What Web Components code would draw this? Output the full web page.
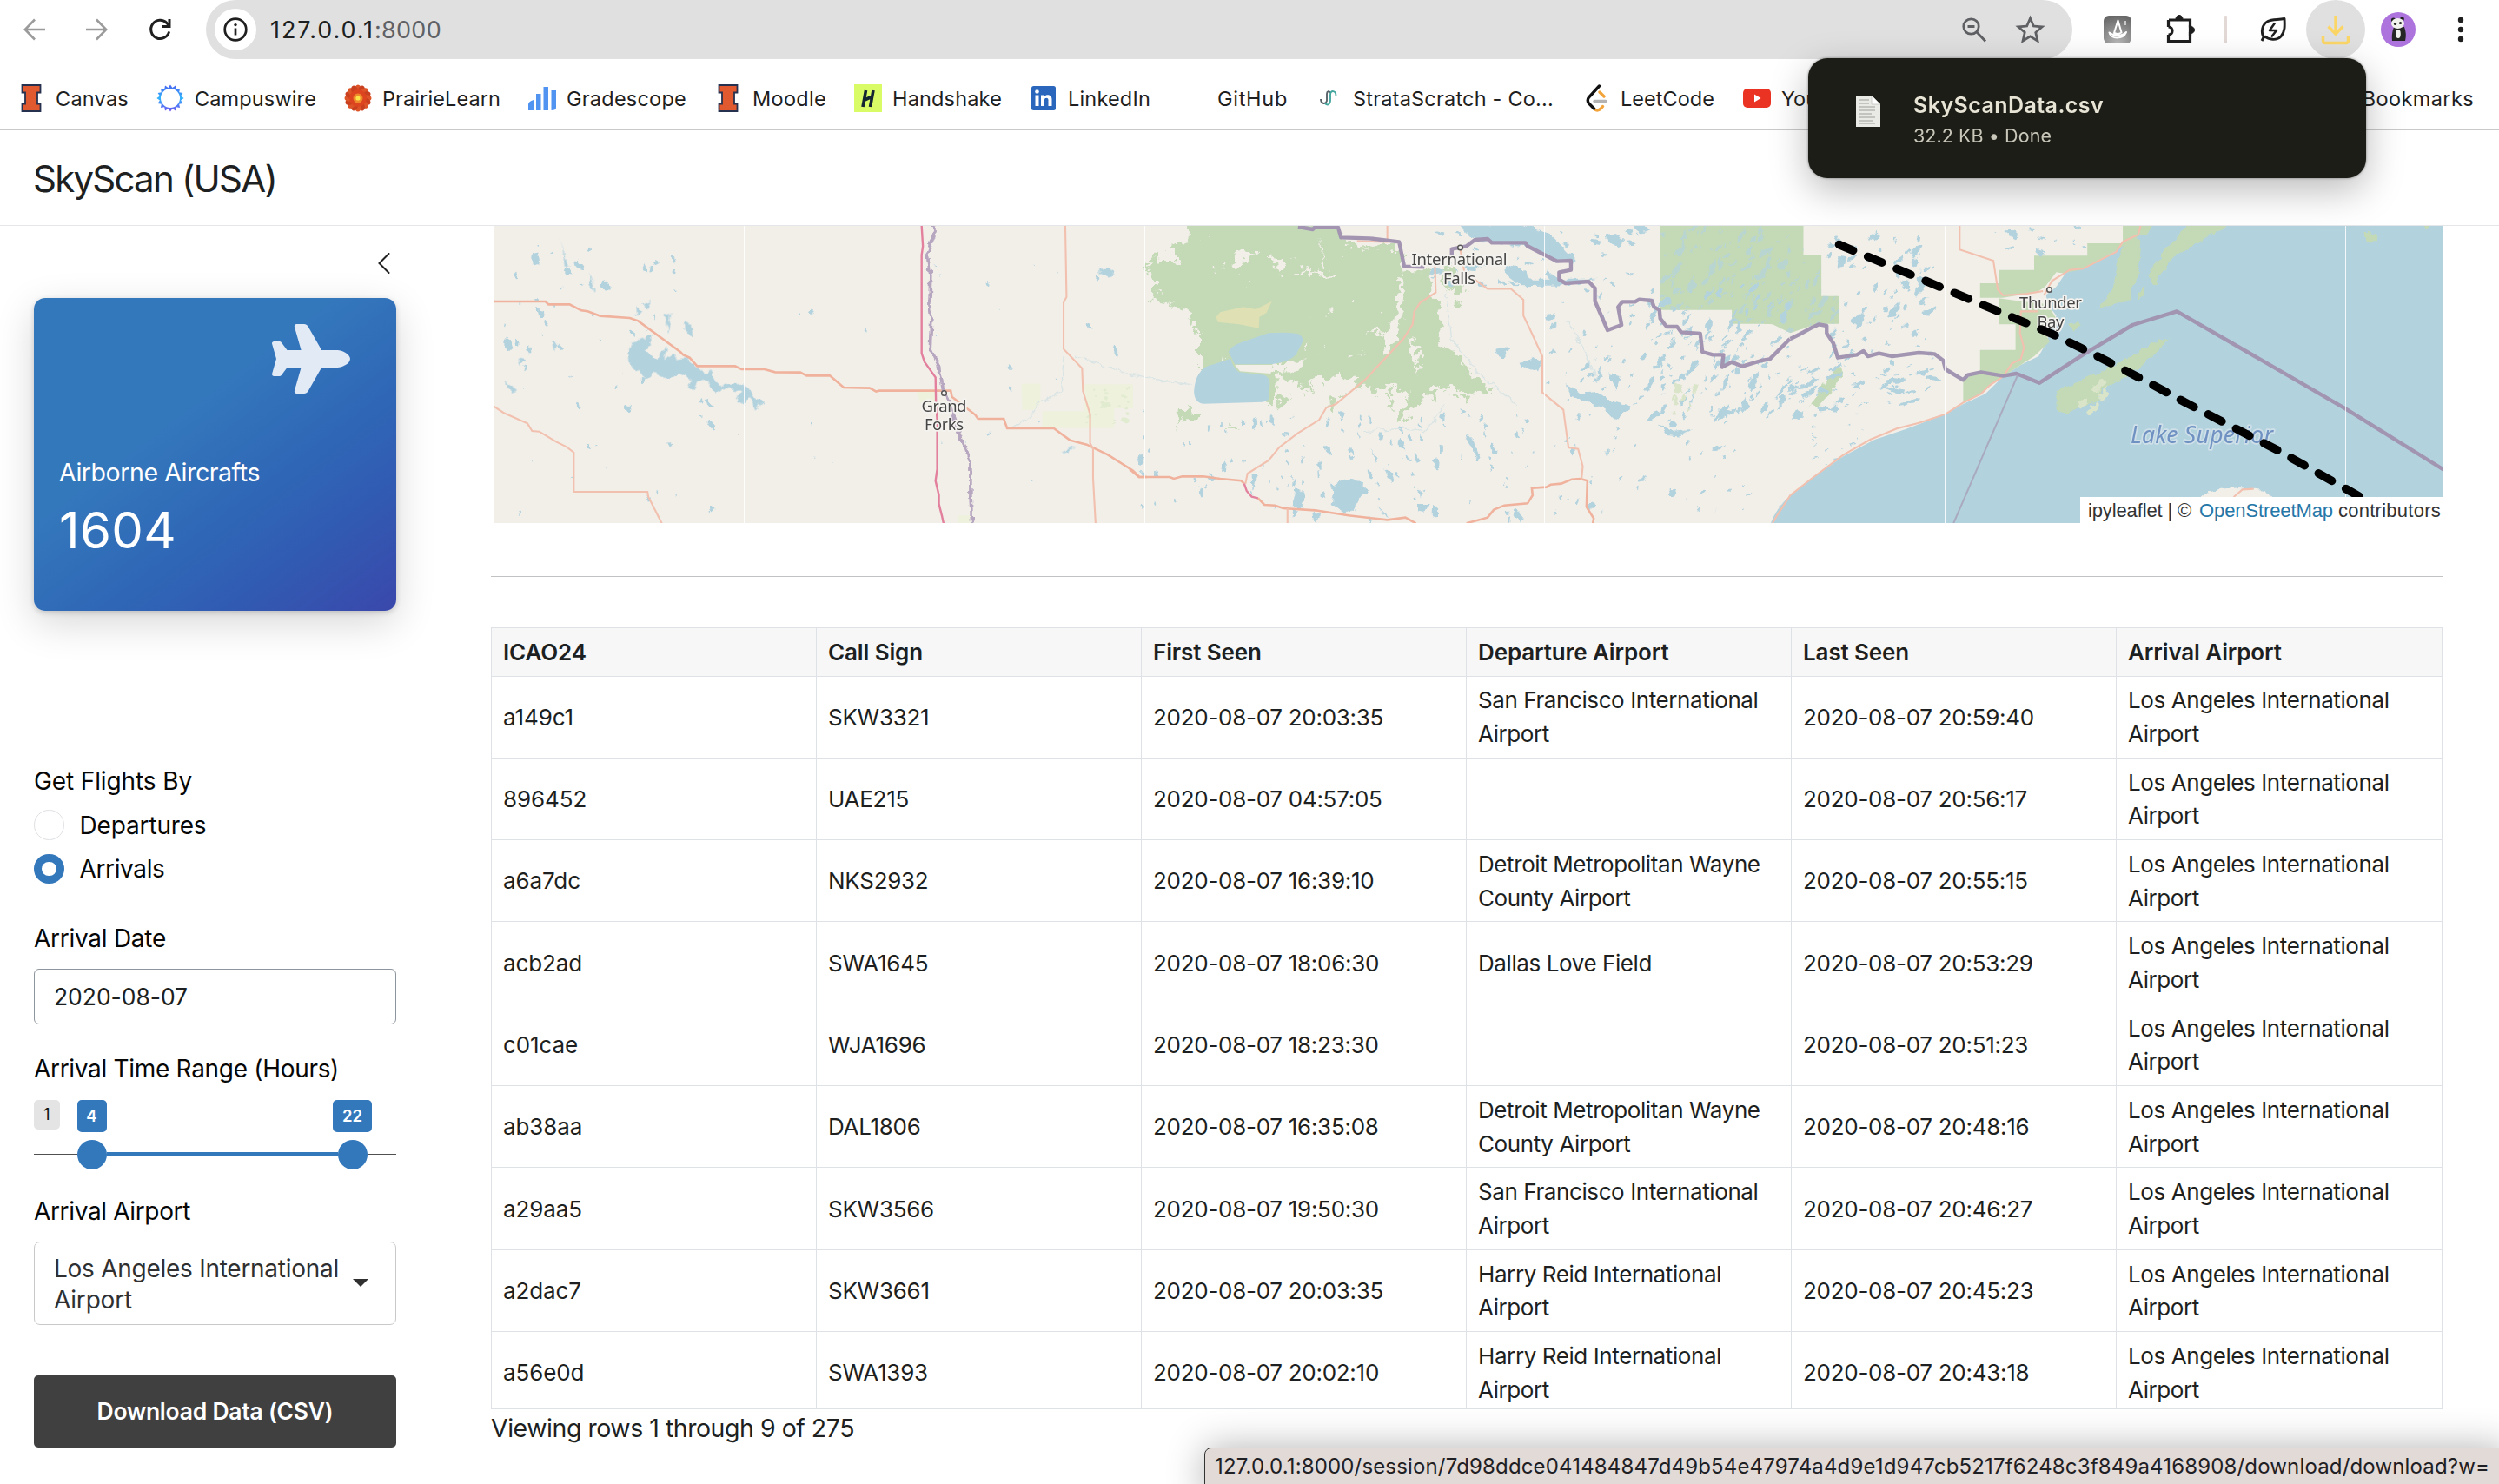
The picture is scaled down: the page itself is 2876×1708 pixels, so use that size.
<!DOCTYPE html>
<html lang="en">
<head>
<meta charset="utf-8">
<title>SkyScan (USA)</title>
<style>
html,body{margin:0;padding:0;background:#fff;overflow:hidden}
body{width:2876px;height:1708px;font-family:Inter,"Noto Sans",sans-serif;color:#1d1f21}
</style>
</head>
<body>
<sky-app></sky-app>
<script>
const define=(name,html,after)=>{
  const t=document.createElement('template');t.innerHTML=html;
  customElements.define(name,class extends HTMLElement{
    connectedCallback(){
      if(this.shadowRoot)return;
      this.attachShadow({mode:'open'}).appendChild(t.content.cloneNode(true));
      if(after)after.call(this,this.shadowRoot);
    }
  });
};

/* Text set to an exact advance width by tracking. */
define('fit-text','<style>:host{display:inline-block;white-space:nowrap}span{display:inline-block}</style><span><slot></slot></span>',function(r){
  const w=+this.getAttribute('w'),s=r.querySelector('span'),n=this.textContent.length;
  const nat=s.getBoundingClientRect().width;
  s.style.letterSpacing=((w-nat)/n).toFixed(3)+'px';
  this.style.width=w+'px';
});

/* ---------- browser chrome ---------- */
define('browser-toolbar',`<style>
:host{display:flex;height:68px;align-items:center;background:#fff;padding-left:24px;box-sizing:border-box}
svg{display:block;flex:none}
.pill{display:flex;align-items:center;box-sizing:border-box;width:2148px;height:68px;border-radius:34px;background:#e0e0e0;padding:0 28px 0 10px;margin-left:37px}
.info{width:48px;height:48px;border-radius:50%;background:#fff;display:flex;align-items:center;justify-content:center;margin-right:16px}
.url{font-size:27px;line-height:34px;flex:1;padding-top:1px}
.port{color:#5f6165}
.dl{width:68px;height:68px;border-radius:50%;background:#e0e0e0;display:flex;align-items:center;justify-content:center}
</style>
<svg width="32" height="32" viewBox="0 0 32 32" fill="none" stroke="#9b9b9b" stroke-width="2.6"><path d="M28 16H5M16 4.5L4.8 16 16 27.5"/></svg>
<svg style="margin-left:39px" width="32" height="32" viewBox="0 0 32 32" fill="none" stroke="#9b9b9b" stroke-width="2.6"><path d="M4 16h23M16 4.500L27.200 16 16 27.500"/></svg>
<svg style="margin-left:41px" width="32" height="32" viewBox="0 0 32 32" fill="none" stroke="#1f1f1f" stroke-width="3"><path d="M26.600 18.500A10.600 10.600 0 1 1 24 8.600l2.500 2.600"/><path d="M27 4v8.500h-8.500"/></svg>
<div class="pill">
 <div class="info"><svg width="30" height="30" viewBox="0 0 30 30"><circle cx="15" cy="15" r="12.300" fill="none" stroke="#1f1f1f" stroke-width="2.700"/><path d="M15 13.500v8" stroke="#1f1f1f" stroke-width="2.700"/><circle cx="15" cy="9.600" r="1.700" fill="#1f1f1f"/></svg></div>
 <div class="url"><fit-text w="120">127.0.0.1</fit-text><fit-text w="77" class="port">:8000</fit-text></div>
 <svg width="32" height="32" viewBox="0 0 32 32" fill="none" stroke="#5f6063" stroke-width="2.800"><circle cx="12.500" cy="12.500" r="8.700"/><path d="M19 19l10 10.500M8.500 12.500h8"/></svg>
 <svg style="margin-left:28px" width="41" height="41" viewBox="0 0 24 24" fill="#5f6063"><path d="M22 9.240l-7.190-.62L12 2 9.190 8.630 2 9.240l5.460 4.730L5.820 21 12 17.270 18.180 21l-1.630-7.030L22 9.240zM12 15.400l-3.760 2.270 1-4.280-3.320-2.880 4.380-.38L12 6.100l1.710 4.040 4.380.38-3.320 2.880 1 4.280L12 15.400z"/></svg>
</div>
<svg style="margin-left:36px" width="32" height="32" viewBox="0 0 32 32"><defs><radialGradient id="g" cx=".5" cy="1" r="1"><stop offset="0" stop-color="#b9b9b9"/><stop offset="1" stop-color="#686868"/></radialGradient></defs><rect width="32" height="32" rx="6" fill="url(#g)"/><path d="M16.500 5.500L12 20c3 1.500 6 1 8.500-.5zM6.500 19.500c1 8 16 8 19.500-.5-4.500 5-14 5-19.500 .5z" fill="none" stroke="#fff" stroke-width="2" stroke-linejoin="round"/><path d="M25 6v5M22.500 8.500h5" stroke="#fff" stroke-width="1.200"/></svg>
<svg style="margin-left:37px" width="38" height="38" viewBox="0 0 38 38" fill="none" stroke="#1f1f1f" stroke-width="3.200"><path d="M6 8h24.500v8.500M30.500 22v10.500H5.500V25M5.500 16V8"/><path d="M5.500 16c6 0 6 9 0 9"/><path d="M14 7c0-6 8-6 8 0zM31 15.500c6 0 6 8 0 8z" fill="#1f1f1f" stroke-width="1"/><path d="M30.500 14v12"/></svg>
<svg style="margin-left:32px" width="4" height="32"><rect width="3" height="32" rx="1" fill="#e2d9d6"/></svg>
<svg style="margin-left:36px" width="36" height="34" viewBox="0 0 36 34" fill="none" stroke="#1f1f1f" stroke-width="2.900" stroke-linejoin="round"><path d="M6 27.500C1 20 3.500 11 10 7.500 15 5 22 6 29 4.500c.5 8 .8 15-4 20.500C20 30 11 29 6 24.500M6 24l-3 6"/><path d="M18 9.500l-6 8.500h8l-6 7.500" stroke-width="2.500"/></svg>
<div class="dl" style="margin-left:18px"><svg width="34" height="36" viewBox="0 0 34 36" fill="none" stroke="#fbd667" stroke-width="3.400"><path d="M17 2v20M8.500 14.500L17 23l8.500-8.500M2.500 25v6a2.500 2.500 0 0 0 2.500 2.500h24a2.500 2.500 0 0 0 2.500-2.500v-6"/></svg></div>
<svg style="margin-left:18px" width="40" height="40" viewBox="0 0 40 40"><circle cx="20" cy="20" r="20" fill="#ae74de"/><path d="M15 17h12q3 8 1 16H13q-1-8 2-16z" fill="#262626"/><circle cx="14.500" cy="9" r="2.600" fill="#202020"/><circle cx="24.500" cy="8" r="2.400" fill="#202020"/><ellipse cx="19.500" cy="13" rx="7.500" ry="6" fill="#f1f1ee"/><circle cx="16.500" cy="13.500" r="1.600" fill="#222"/><circle cx="22.500" cy="12.500" r="1.600" fill="#222"/><ellipse cx="20" cy="25" rx="2.800" ry="5" fill="#f1f1ee"/></svg>
<svg style="margin-left:47px" width="10" height="34" viewBox="0 0 10 34" fill="#1f1f1f"><circle cx="5" cy="6" r="3.200"/><circle cx="5" cy="17" r="3.200"/><circle cx="5" cy="28" r="3.200"/></svg>`);

define('book-mark',`<style>:host{display:flex;align-items:center;gap:12px;flex:none}.i{width:32px;height:32px;flex:none}.i ::slotted(svg){display:block}.t{padding-top:1px}</style><div class="i"><slot name="icon"></slot></div><div class="t"><slot></slot></div>`);

const blockI='<svg slot="icon" width="32" height="32" viewBox="0 0 32 32"><path d="M5.500 1h21v8.500H23v13h3.500V31h-21v-8.500H9v-13H5.500z" fill="#e0592f" stroke="#26314f" stroke-width="1.800"/></svg>';
const star=(()=>{let p='';for(let i=0;i<32;i++){const r=i%2?12.300:15.600,a=i*Math.PI/16;p+=(i?'L':'M')+(16+r*Math.cos(a)).toFixed(1)+' '+(16+r*Math.sin(a)).toFixed(1)}return p+'Z'})();
const petals=(()=>{let p='';for(let i=0;i<16;i++)p+=`<ellipse cx="16" cy="6" rx="3.800" ry="5.500" fill="${i%2?'#c8401f':'#dd5428'}" transform="rotate(${i*22.5} 16 16)"/>`;return p})();
define('bookmarks-bar',`<style>
:host{display:flex;align-items:center;gap:33px;height:82px;box-sizing:border-box;padding:10px 29px 0 20px;border-bottom:2px solid #c9c9c9;background:#fff;font-size:23.500px;line-height:32px;color:#1f1f1f}
.all{margin-left:auto;padding-top:1px}
</style>
<book-mark>${blockI}<fit-text w="84">Canvas</fit-text></book-mark>
<book-mark style="margin-left:-1px"><svg slot="icon" width="32" height="32" viewBox="0 0 32 32"><defs><linearGradient id="c" x1="0" y1="0" x2="0" y2="1"><stop offset="0" stop-color="#4a62f2"/><stop offset=".5" stop-color="#30b4fb"/><stop offset="1" stop-color="#6f4df0"/></linearGradient></defs><path d="${star}" fill="url(#c)"/><circle cx="16" cy="16" r="11" fill="#fff"/></svg><fit-text w="140">Campuswire</fit-text></book-mark>
<book-mark style="margin-left:-1px"><svg slot="icon" width="32" height="32" viewBox="0 0 32 32">${petals}<circle cx="16" cy="16" r="10" fill="#dc451f"/><circle cx="16" cy="16" r="5.500" fill="#ee8a2c"/><circle cx="16" cy="16" r="2.600" fill="#fbe34a"/></svg><fit-text w="136">PrairieLearn</fit-text></book-mark>
<book-mark style="margin-left:-1px"><svg slot="icon" width="32" height="32" viewBox="0 0 32 32" fill="#5093f0"><path d="M0 30V23q0-3 6-5v12zM9 11h5.500v19H9zM17.500 3H23v27h-5.500zM26.500 7H32v20q0 3-5.500 3z"/></svg><fit-text w="138">Gradescope</fit-text></book-mark>
<book-mark style="margin-left:-1px">${blockI}<fit-text w="85">Moodle</fit-text></book-mark>
<book-mark style="margin-left:-1px"><svg slot="icon" width="32" height="32" viewBox="0 0 32 32"><rect width="32" height="32" fill="#d9fb66"/><path d="M13.500 7L10 26M22 7l-3.500 19M12 18l9-4" stroke="#132433" stroke-width="3.600" fill="none"/></svg><fit-text w="126">Handshake</fit-text></book-mark>
<book-mark style="margin-left:-1px"><svg slot="icon" width="32" height="32" viewBox="0 0 32 32"><rect x="2" y="2" width="28" height="28" rx="2.500" fill="#2a67bc"/><path d="M6.500 12.500h4V25h-4zM13 12.500h4V25h-4zM21.500 25v-7c0-3-4.500-3-4.500 0v-4c2-3 8.500-2.500 8.500 3v8z" fill="#fff"/><circle cx="8.500" cy="8.500" r="2.300" fill="#fff"/></svg><fit-text w="95">LinkedIn</fit-text></book-mark>
<book-mark><span slot="icon"></span><fit-text w="81">GitHub</fit-text></book-mark>
<book-mark style="margin-left:-2px"><svg slot="icon" width="32" height="32" viewBox="0 0 32 32" fill="none" stroke-width="1.900"><path d="M7 17c0 5 5 7 7 2V11c0-3 3-4 4-1" stroke="#59646a"/><path d="M12 22c3 3 6 1 6-4v-6c0-6 7-5 6.500 2" stroke="#43a79f"/></svg><fit-text w="231">StrataScratch - Co...</fit-text></book-mark>
<book-mark><svg slot="icon" width="32" height="32" viewBox="0 0 32 32" fill="none" stroke-linecap="round" stroke-width="3.400"><path d="M20 9l5 5M14.500 29q4 3 9-3.500" stroke="#f2a33a"/><path d="M14 19.500h13" stroke="#b3b3b3"/><path d="M19.500 2L7.500 15q-2.500 3.500 0 7l6 6" stroke="#111"/></svg><fit-text w="108">LeetCode</fit-text></book-mark>
<book-mark><svg slot="icon" width="32" height="32" viewBox="0 0 32 32"><rect y="5" width="32" height="22" rx="5" fill="#ea3323"/><path d="M13 11.500v9l7.500-4.500z" fill="#fff"/></svg><fit-text w="96">YouTube</fit-text></book-mark>
<span class="all"><fit-text w="164">All Bookmarks</fit-text></span>`);

define('download-popup',`<style>
:host{position:absolute;left:2081px;top:67px;width:642px;height:138px;box-sizing:border-box;border-radius:22px;background:#1c1d16;box-shadow:0 0 3px rgba(0,0,0,.45),0 14px 44px rgba(0,0,0,.27);display:flex;padding:38px 0 0 55px;gap:38px}
.t{display:flex;flex-direction:column}
.a{font-size:25px;font-weight:600;color:#e7e4d6;line-height:32px}
.b{font-size:21.500px;color:#c9c7ba;line-height:28px;margin-top:5px}
svg{margin-top:5px;flex:none}
</style>
<svg width="28" height="36" viewBox="0 0 28 36"><path d="M0 0h18l10 10v26H0z" fill="#e9e9e6"/><path d="M18 0v10h10z" fill="#fff" stroke="#c2c2bd" stroke-width=".8"/><path d="M4 5h11M4 9h11M4 13h18M4 17h18M4 21h14M4 25h18M4 29h16M4 32h18" stroke="#c3c3c0" stroke-width="2"/></svg>
<div class="t"><fit-text class="a" w="219">SkyScanData.csv</fit-text><fit-text class="b" w="159">32.2 KB • Done</fit-text></div>`);

define('status-url',`<style>
:host{position:absolute;left:1386px;top:1666px;width:1500px;height:60px;box-sizing:border-box;background:#e2dad7;border:1.500px solid #333;border-radius:8px 0 0 0;box-shadow:0 0 44px rgba(0,0,0,.3);padding:4px 0 0 11px;font-size:24px;line-height:34px;color:#1f2023}
</style><fit-text w="1467">127.0.0.1:8000/session/7d98ddce041484847d49b54e47974a4d9e1d947cb5217f6248c3f849a4168908/download/download?w=</fit-text>`);

/* ---------- sidebar ---------- */
define('value-box',`<style>
:host{display:flex;flex-direction:column;height:359.500px;box-sizing:border-box;border-radius:13px;padding:30px 53px 0 29px;color:#fff;background:linear-gradient(143deg,#3478bc 0%,#3478bc 38%,#2f67b6 62%,#315bb3 78%,#3a48ab 100%);box-shadow:0 2px 6px rgba(0,0,0,.16),0 14px 46px rgba(0,0,0,.16)}
svg{align-self:flex-end;display:block;flex:none}
.l{font-size:28.500px;line-height:34px;margin-top:74px}
.v{font-size:58px;line-height:70px;margin-top:14px}
</style>
<svg width="90" height="80" viewBox="0 0 576 512" fill="#e1eaf5"><path d="M482.300 192c34.200 0 93.700 29 93.700 64c0 36-59.500 64-93.700 64l-116.600 0L265.200 495.900c-5.700 10-16.300 16.100-27.800 16.100l-56.200 0c-10.600 0-18.300-10.200-15.400-20.400l49-171.600L112 320 68.800 377.600c-3 4-7.800 6.400-12.800 6.400l-42 0c-7.800 0-14-6.300-14-14c0-1.300 .2-2.600 .5-3.900L32 256 .5 145.900c-.4-1.300-.5-2.600-.5-3.900c0-7.800 6.300-14 14-14l42 0c5 0 9.800 2.400 12.800 6.400L112 192l102.900 0-49-171.600C162.900 10.200 170.600 0 181.200 0l56.200 0c11.500 0 22.100 6.200 27.800 16.100L365.700 192l116.600 0z"/></svg>
<fit-text class="l" w="231">Airborne Aircrafts</fit-text><fit-text class="v" w="135">1604</fit-text>`);

define('radio-option',`<style>
:host{display:flex;align-items:center;gap:18px;height:35px;font-size:28px;line-height:34px}
i{width:34.500px;height:34.500px;box-sizing:border-box;border-radius:50%;border:1px solid #dfe1e4;flex:none}
:host([checked]) i{border:9.250px solid #3478bc}
</style><i></i><slot></slot>`);

define('range-slider',`<style>
:host{display:block;height:81px}
.tags{display:flex;height:37px;align-items:flex-start;font-size:18.500px}
.tags span{display:flex;align-items:center;justify-content:center;border-radius:5px;height:37px;background:#3478bc;color:#fff;font-weight:600}
.tags .min{width:30px;height:34px;background:#e4e4e4;color:#111;font-weight:400;margin-right:19.500px;font-size:18px}
.tr{display:flex;align-items:center;height:34.500px;margin-top:9px}
.tr b{width:34.500px;height:34.500px;border-radius:50%;background:#3478bc}
.tr .n{height:1px;background:#505050}.tr .f{height:5px;background:#3478bc;flex:1}
</style><div class="tags"><span class="min">1</span><span style="width:34px">4</span><span style="width:45px;margin-left:260.500px">22</span></div>
<div class="tr"><div class="n" style="width:49.500px"></div><b></b><div class="f"></div><b></b><div class="n" style="width:33px"></div></div>`);

define('side-bar',`<style>
:host{display:flex;flex-direction:column;width:500px;height:1448px;box-sizing:border-box;padding:0 43px 0 39px;border-right:1px solid #e7e8ec;font-size:28px;line-height:34px;color:#070707}
.top{height:83px;display:flex;justify-content:flex-end;flex:none;box-sizing:border-box;padding:31px 7px 0 0}
hr{border:0;height:1px;background:#b9bbbd;margin:86.500px 0 92px;width:100%}
.in{height:64px;box-sizing:border-box;border:1px solid #8d959e;border-radius:6px;padding:14px 22px;margin-top:18px;color:#1d1f21;font-size:26.500px;line-height:34px}
.sel{height:96px;box-sizing:border-box;border:1px solid #c9c9cb;border-radius:7px;padding:12px 31px 0 22px;margin-top:18px;color:#303030;line-height:36px;display:flex;justify-content:space-between}
.caret{width:0;height:0;border:9px solid transparent;border-top-color:#303030;border-bottom:0;margin-top:30px}
.btn{height:83px;background:#404040;border-radius:5px;margin-top:58px;color:#fff;display:flex;align-items:center;justify-content:center;font-weight:600;font-size:26.500px}
</style>
<div class="top"><svg width="14" height="24" viewBox="0 0 14 24" fill="none" stroke="#222" stroke-width="2" stroke-linecap="round"><path d="M12.500 1L1.500 12l11 11"/></svg></div>
<value-box></value-box><hr>
<fit-text w="182">Get Flights By</fit-text>
<radio-option style="margin-top:16px"><fit-text w="146">Departures</fit-text></radio-option>
<radio-option checked style="margin-top:15.500px"><fit-text w="98">Arrivals</fit-text></radio-option>
<fit-text w="152" style="margin-top:45px">Arrival Date</fit-text>
<div class="in"><fit-text w="154">2020-08-07</fit-text></div>
<fit-text w="351" style="margin-top:34px">Arrival Time Range (Hours)</fit-text>
<range-slider style="margin-top:19px"></range-slider>
<fit-text w="180" style="margin-top:30px">Arrival Airport</fit-text>
<div class="sel"><div><fit-text w="328">Los Angeles International</fit-text><br><fit-text w="90">Airport</fit-text></div><div class="caret"></div></div>
<div class="btn"><fit-text w="272">Download Data (CSV)</fit-text></div>`);

/* ---------- map ---------- */
let seed=7;const rnd=()=>(seed=(seed*16807)%2147483647)/2147483647;
/* n small ponds inside a box; tilt sets their common direction */
const ponds=(x0,y0,x1,y1,n,s,tilt,el)=>{
  let o='';
  for(let i=0;i<n;i++){
    const x=x0+rnd()*(x1-x0),y=y0+rnd()*(y1-y0),k=s*(.25+rnd()*rnd()*1.300),a=(tilt+(rnd()-.5)*50)*Math.PI/180;
    let p='';for(let j=0;j<7;j++){const t=j*Math.PI*2/7,rr=.6+rnd()*.8,u=Math.cos(t)*k*el*rr,v=Math.sin(t)*k*rr;p+=(j?'L':'M')+(x+u*Math.cos(a)-v*Math.sin(a)).toFixed(1)+' '+(y+u*Math.sin(a)+v*Math.cos(a)).toFixed(1)}
    o+=p+'Z';
  }
  return o;
};
const A='translate(560 250) scale(.48469 .33333)',B='translate(1300 250) scale(.48469 .33333)',C='translate(2040 250) scale(.5102 .33333)';
define('osm-map',`<style>
:host{display:block;width:2243px;height:342px;position:relative;background:#f2efe9}
svg{display:block}
path{vector-effect:non-scaling-stroke}
.w{fill:#b2d2de}.g{fill:#c4dab7}.l{fill:#f2efe9}
.r{fill:none;stroke:#f0b29c;stroke-width:2.600}.r2{fill:none;stroke:#f2c0ae;stroke-width:2.100}.p{fill:none;stroke:#e2809d;stroke-width:2.400}
.b{fill:none;stroke:#a395b2;stroke-width:4.400;stroke-linejoin:round}
text{font-family:"Noto Sans",sans-serif;fill:#454545;stroke:#f5f3ef;stroke-width:3.500px;paint-order:stroke;text-anchor:middle;font-size:18.500px;stroke-linejoin:round}
.attr{position:absolute;right:0;bottom:0;width:417px;height:30px;box-sizing:border-box;padding-left:9px;background:#fff;font:22px/31px "Liberation Sans",Arial,sans-serif;color:#333;white-space:pre;display:flex}
.attr a{color:#2577a8}
</style>
<svg width="2243" height="342" viewBox="568 260 2243 342">
<defs>
<filter id="rough" x="-5%" y="-5%" width="110%" height="110%"><feTurbulence type="fractalNoise" baseFrequency=".09" numOctaves="4" seed="4"/><feDisplacementMap in="SourceGraphic" scale="22" xChannelSelector="R" yChannelSelector="G"/></filter>
<filter id="fine" x="-5%" y="-5%" width="110%" height="110%"><feTurbulence type="fractalNoise" baseFrequency=".12" numOctaves="2" seed="9"/><feDisplacementMap in="SourceGraphic" scale="8" xChannelSelector="R" yChannelSelector="G"/></filter>
<clipPath id="park"><path transform="${B}" d="M1260 30H1600V385H1560V368H1430V320H1345V300H1345V320H1260Z"/><path transform="${C}" d="M-20 42H68V132H110V272H150V368H100L40 400 0 370-20 368Z"/></clipPath>
</defs>
<g transform="${A}">
<path fill="#eef1dc" d="M1270 575H1315V640L1300 665H1272ZM1420 577H1535V660H1490V728H1320V670H1420ZM1020 600H1067V650L1030 640ZM1120 1030H1150V1055H1120Z"/>
<path fill="#e0ebcf" d="${ponds(1425,585,1530,720,26,7,60,1)}"/>
</g>
<g filter="url(#rough)">
<path class="g" transform="${B}" d="M145 10L500 10 500 75 560 100 645 110 655 190 650 200 700 175 725 180 715 240 735 310 745 400 730 440 790 480 805 530 850 590 850 610 800 600 740 580 700 620 690 650 650 600 620 570 590 610 570 580 530 590 540 560 450 555 400 570 350 550 350 610 330 640 165 600 165 400 140 350 150 320 110 310 50 280 70 240 40 170 60 150 130 160 95 100 140 90Z"/>
<path class="l" transform="${B}" d="M255 110L295 120 280 150 255 175 245 150ZM325 120L370 160 350 200 345 160ZM520 60L640 90 638 108 560 98ZM640 210L652 200 645 330 632 430 615 400 637 300ZM665 420L690 440 685 550 675 480ZM555 398L610 390 632 430 605 480 600 430 612 405ZM320 512L430 490 390 525 350 540ZM455 60L462 180 455 180ZM670 60L660 190 672 190ZM395 180L480 195 480 205 400 190Z"/>
<path class="g" transform="${B}" d="M140 650L168 680 165 700 120 700 108 725 115 685ZM740 175L770 180 800 250 770 260 745 240ZM770 280L795 310 785 325ZM350 620L380 625 355 685ZM650 620L700 630 680 660 640 700 630 690 660 650ZM230 725L255 735 240 740Z"/>
<path class="l" d="${ponds(1345,268,1600,440,26,1.800,60,1.500)}"/>
<path class="g" d="${ponds(1480,440,1700,465,26,4,70,1.500)}${ponds(1325,290,1370,345,12,4,70,1.300)}"/>
</g>
<g transform="${B}"><path fill="#dfe0b3" d="M205 345L215 328 270 310 300 318 338 290 325 330 308 345 307 383 260 370 210 362Z"/>
<path class="w" d="M235 465Q240 445 270 430L330 400Q380 395 400 403 413 412 411 430L395 475Q380 500 340 507L250 508ZM240 488Q245 520 260 535L320 545Q333 555 333 575L331 622Q330 635 315 638L175 644Q153 640 153 600 155 560 165 540 175 515 200 508Z"/><path class="l" d="M250 510L340 510 335 540 262 532Z"/></g>
<path class="g" transform="${B}" d="M1260 20H1600V385H1560V368H1430V320H1345V300H1345V320H1260Z"/>
<g transform="${C}">
<path class="g" d="M-20 42H68V132H110V272H150V368H100L40 400 0 370-20 368Z"/>
<path class="w" d="M-6 1065Q5 1010 40 960L90 900 160 825 230 768 300 732 390 680 430 645 480 610 520 550 560 510 600 480 615 440 630 380 640 340 620 300 615 250 640 200 700 175 770 120 800 70 830 50 850 20H1520V1065Z"/>
<path class="g" d="M790 20H860L845 60 830 60 770 120 700 180 650 195 620 235 600 255 570 265 520 278 468 278V228H510V182H590V133H710V90H790ZM510 280L560 290 620 300 640 350 640 370 615 400 625 430 590 480 550 520 500 570 470 610 430 638V560L468 530V458H548V370H510Z"/>
<path class="l" d="M640 190L660 195 640 240 620 265 612 270 615 240Z"/>
</g>
<g filter="url(#fine)">
<g transform="${C}" class="g"><path d="M800 60L832 80 826 200 805 285 735 320 768 240 780 150ZM940 20L1040 20 955 90 900 140 862 235 848 200 880 120ZM895 415L870 460 810 540 740 600 735 635 700 650 660 680 640 660 640 600 700 560 800 490 850 440ZM665 370L690 355 697 375 680 392ZM1335 50L1365 55 1360 85 1340 85ZM825 255L840 240 830 295ZM1460 20H1490L1475 38ZM145 510L158 540 130 610 100 660 85 650 110 590Z"/><path fill="#f2efe9" d="M955 975L975 950 1050 933 1110 945 1125 975Z"/></g>
<path class="w" transform="${A}" d="M335 470L345 430 365 425 385 415 388 445 375 460 400 490 418 465 428 440 422 490 445 470 452 490 475 485 495 510 520 540 530 525 532 550 555 580 610 575 640 630 658 635 638 665 625 620 612 650 590 640 605 600 555 590 545 615 525 565 500 570 490 600 478 590 485 560 460 540 430 560 400 540 380 560 365 540 338 510ZM355 310L370 320 358 345ZM375 300L390 290 380 320ZM425 335L438 330 432 400 425 370ZM470 360L485 370 490 410 472 395ZM1455 178L1480 175 1492 195 1475 205 1455 195ZM175 65L190 160 200 170 185 170 180 100ZM245 190L258 260 247 240ZM155 430L168 440 160 468ZM40 565L75 600 60 605ZM1360 815L1395 790 1380 812ZM75 490L90 495 80 510Z"/>
<path class="w" transform="${B}" d="M480 990L488 920 510 905 550 915 567 950 545 970 530 1010 510 1022ZM868 470L880 450 905 448 888 485ZM925 505L965 485 980 495 970 535 940 518ZM290 890L305 895 292 945ZM395 940L418 950 412 1000 385 1000ZM605 865L630 890 620 915ZM385 1015L400 1010 390 1040ZM520 820L535 830 525 842ZM685 990L710 990 700 1020 685 1015ZM575 800L590 850 580 840ZM495 670L512 680 500 702ZM785 660L800 675 788 682ZM365 740L385 745 375 760ZM590 1000L615 1040 605 1035ZM780 25L935 25 1000 60 1060 150 1010 150 940 100 860 88 815 75ZM890 160L930 180 960 215 1110 215 1040 235 930 238 900 205ZM1035 580L1070 605 1110 600 1135 630 1195 655 1150 700 1125 660 1090 640 1050 620ZM1140 540L1165 550 1155 600ZM1255 710L1290 740 1335 735 1310 755 1275 750Z"/>
<path class="w" d="${ponds(575,280,780,440,44,3,70,1.700)}${ponds(570,440,860,600,22,2.600,70,1.600)}${ponds(870,290,1300,600,24,2,70,1.800)}${ponds(1310,470,1420,600,22,3,70,1.800)}${ponds(1420,480,1770,600,95,3,75,2.200)}${ponds(1650,262,1900,330,50,3.500,20,2.200)}${ponds(1780,330,1900,450,34,2.600,-40,1.800)}${ponds(1900,330,2060,480,130,3,-58,2.800)}${ponds(1780,430,2050,590,62,2.800,-60,2)}${ponds(2060,420,2225,470,62,2.500,-15,3)}${ponds(2060,470,2150,540,26,2.300,-20,2.500)}${ponds(2105,270,2225,420,80,3.600,-55,2)}${ponds(2290,262,2400,290,12,3,10,2)}"/>
<g clip-path="url(#park)"><path class="w" opacity=".65" d="${ponds(1900,262,2130,390,190,2.600,-55,3)}"/></g>
<path fill="#d9e4c9" d="${ponds(1925,445,1950,475,12,4,90,1.500)}${ponds(2380,440,2430,470,8,4,-40,2)}"/>
<path fill="none" stroke="#d9e4e4" stroke-width="1.300" transform="${A}" d="M1370 480L1365 600 1315 640 1290 690 1250 725M1400 480L1480 520 1540 550"/>
<path fill="none" stroke="#d9e4e4" stroke-width="1.300" transform="${B}" d="M750 260L765 420 830 540 920 650M560 740L640 730 700 740 750 650M0 540L100 570 150 578M1040 360L1080 460 1110 560"/>
</g>
<g transform="${A}">
<path class="r" d="M17 291H140L147 301H197L225 322 240 325 270 341 340 348 360 358 460 465 467 475 482 485 500 514H590L605 525H660L685 535 745 536 760 547H815L848 588 910 590 925 602 932 599H1102L1105 620 1160 682 1167 696H1228L1236 729H1347L1385 770 1425 785 1475 820 1535 875 1550 897H1568"/>
<path class="r2" d="M17 653L40 675 97 712 108 738 125 740 165 775 190 793 207 812V948H382L384 965 416 1057M1374 30L1377 275 1370 295V455L1414 522 1416 600 1433 680V780L1440 800V900L1446 1057"/>
<path class="p" d="M1033 30L1036 100 1033 130V470L1040 500 1066 553 1067 640 1070 700V870L1066 910 1074 960V990L1081 1030 1085 1057"/>
</g>
<g filter="url(#fine)"><path fill="none" stroke="#b7a6c0" stroke-width="3.600" transform="${A}" d="M1058 20L1067 45 1058 80 1046 130 1054 200 1052 300 1056 350 1053 450 1073 510 1085 600 1098 640 1108 690 1123 750 1138 800 1149 850V960L1153 1067"/></g>
<g transform="${B}">
<path class="r" d="M0 870L22 897H95L105 903 125 895H175L215 903 265 910 272 920M305 970L320 993 345 995 365 1005 440 1012 520 1030 612 1045 655 1037 680 1057M800 1057L850 1037 865 1010 890 995 945 988 957 960 955 935 990 932 1000 923 1025 920 1050 905 1070 903 1087 910 1085 1000 1102 1040 1100 1057"/>
<path class="r2" d="M725 170L727 260 690 295 676 325 672 370 650 420 560 560 490 645 467 658 450 700 400 745 355 795 330 840 280 885 275 920M785 110L795 190 850 247H905L935 285V340L950 385 980 480V605L1030 665 1042 795 1065 800 1076 860 1073 905M375 1005V1057M612 30V85L540 83"/>
<path class="p" d="M272 920L278 945 290 965 305 970"/>
<path class="b" d="M400 33L435 42 440 35H495L502 70 570 73 640 85 652 170 700 172M765 130V110L800 100 820 78 850 75 860 88H940L945 100 1015 152 1048 150V182L1020 190V215L1035 228 1090 222 1105 245V290L1135 390 1168 372 1160 310 1170 292 1200 292 1210 284 1240 288 1245 310 1258 320 1260 350 1275 378H1300L1310 397 1355 402 1360 465 1385 475 1410 475 1407 518 1430 500 1455 515 1500 495 1520 490 1568 420"/>
</g>
<g transform="${C}">
<path class="r2" d="M422 30V112L498 150 508 250 520 270 570 265 610 255M830 30L825 60 790 85 775 120 700 178 670 182 630 220 612 270 M600 325L560 325 558 400 567 450 560 490 540 505 520 550 490 580 470 610 430 640 390 680 330 710 280 730 220 768 160 820 90 900 40 960 10 1030 0 1057M1040 966L1060 940 1085 938"/>
<path class="b" style="stroke:#a195b2" d="M40 420L60 405 90 380 105 370 122 375V400L137 435 147 485 190 475 205 462 215 480 240 470 270 480 330 468 365 472 385 495 390 525 430 562 440 545 470 535 520 548 550 540 602 572 700 475 812 372 912 325 1150 535 1293 662 1515 873"/>
<path fill="none" stroke="#a9a9c0" stroke-width="2" d="M553 545L408 1057"/>
</g>
<g stroke="#fff" stroke-width="1" opacity=".85"><path d="M856.500 260V602M1317.500 260V602M1777.500 260V602M2238.500 260V602M2699.500 260V602"/></g>
<g fill="#f5f3ef" stroke="#555" stroke-width="1.500"><circle cx="1086.500" cy="452.500" r="2.800"/><circle cx="1680.500" cy="285" r="2.800"/><circle cx="2358.500" cy="333.500" r="2.800"/></g>
<text x="1086.500" y="473.500" textLength="52">Grand</text><text x="1086.500" y="495" textLength="45">Forks</text>
<text x="1679.500" y="305" textLength="110">International</text><text x="1679.500" y="326.500" textLength="37">Falls</text>
<text x="2360" y="355" textLength="72">Thunder</text><text x="2360" y="376.500" textLength="31">Bay</text>
<text x="2534" y="510" textLength="164" style="font-size:26.500px;font-style:italic;fill:#7092c2;stroke:#cfe0e9">Lake Superior</text>
<path fill="none" stroke="#000" stroke-width="9.500" stroke-linecap="round" stroke-dasharray="17.500 18.500" d="M2116.500 281.500L2361 384Q2440 422 2514.500 463L2620 517.500 2720 574"/>
</svg>
<div class="attr"><fit-text w="97">ipyleaflet | </fit-text><span style="width:31px"> © </span><a><fit-text w="154">OpenStreetMap</fit-text></a><fit-text w="118" style="margin-left:6px">contributors</fit-text></div>`);

/* ---------- table ---------- */
const LAX='Los Angeles International Airport',D='2020-08-07 ';
const rows=[['a149c1','SKW3321','20:03:35','San Francisco International Airport','20:59:40'],['896452','UAE215','04:57:05','','20:56:17'],['a6a7dc','NKS2932','16:39:10','Detroit Metropolitan Wayne County Airport','20:55:15'],['acb2ad','SWA1645','18:06:30','Dallas Love Field','20:53:29'],['c01cae','WJA1696','18:23:30','','20:51:23'],['ab38aa','DAL1806','16:35:08','Detroit Metropolitan Wayne County Airport','20:48:16'],['a29aa5','SKW3566','19:50:30','San Francisco International Airport','20:46:27'],['a2dac7','SKW3661','20:03:35','Harry Reid International Airport','20:45:23'],['a56e0d','SWA1393','20:02:10','Harry Reid International Airport','20:43:18']];
define('flight-table',`<style>
:host{display:block;width:2246px;height:900px;box-sizing:border-box;overflow:hidden;border:1px solid #dee2e6;font-size:26px;line-height:38.700px;letter-spacing:-.28px;color:#1d1f21}
.row{display:grid;grid-template-columns:repeat(6,374px);height:94.330px;box-sizing:border-box;border-bottom:1px solid #dee2e6}
.row.h{height:55.500px;background:#f7f7f7;font-weight:600}
.row>div{display:flex;align-items:center;padding:2px 12px 0 13px;border-right:1px solid #dee2e6;box-sizing:border-box}
.row>div:last-child{border-right:0}
.row>div:nth-child(4),.row>div:nth-child(6){letter-spacing:-.41px}
.row>div:first-child{letter-spacing:-.1px}
.row.h>div{letter-spacing:-.12px;padding-top:3px}
</style><div id="t"></div>`,function(r){
  const line=(c,h)=>`<div class="row ${h||''}">${c.map(x=>`<div>${x}</div>`).join('')}</div>`;
  r.getElementById('t').innerHTML=line(['ICAO24','Call Sign','First Seen','Departure Airport','Last Seen','Arrival Airport'],'h')+rows.map(x=>line([x[0],x[1],D+x[2],x[3],D+x[4],LAX])).join('');
});

define('sky-app',`<style>
:host{display:flex;flex-direction:column;width:2876px;height:1708px;position:relative;overflow:hidden;background:#fff}
header{height:110px;box-sizing:border-box;border-bottom:1px solid #e5e6ea;padding:28px 0 0 38px;font-size:42px;line-height:56px;color:#1d1f21;flex:none}
.body{display:flex;flex:1}
main{display:flex;flex-direction:column;width:2246px;margin-left:65px}
osm-map{align-self:flex-end}
hr{border:0;width:100%;height:1px;background:#c0c2c4;margin:61px 0 58px}
.v{font-size:28.500px;line-height:36px;margin-top:4px}
</style>
<browser-toolbar></browser-toolbar><bookmarks-bar></bookmarks-bar>
<header><fit-text w="280">SkyScan (USA)</fit-text></header>
<div class="body"><side-bar></side-bar><main><osm-map></osm-map><hr><flight-table></flight-table><div class="v"><fit-text w="418">Viewing rows 1 through 9 of 275</fit-text></div></main></div>
<download-popup></download-popup><status-url></status-url>`);
</script>
</body>
</html>
